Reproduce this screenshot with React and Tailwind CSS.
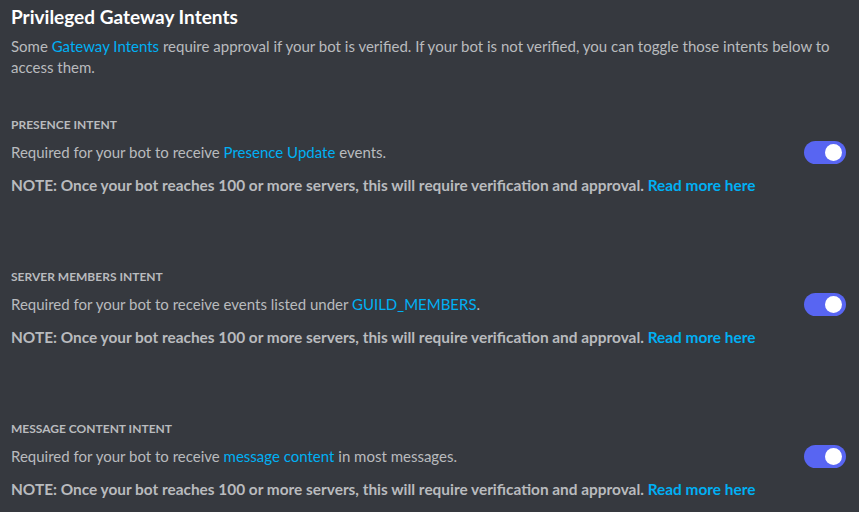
import { useState } from "react";

const intents = [
    {
        label: "Presence Intent",
        before: "Required for your bot to receive ",
        link: "Presence Update",
        after: " events.",
    },
    {
        label: "Server Members Intent",
        before: "Required for your bot to receive events listed under ",
        link: "GUILD_MEMBERS",
        after: ".",
    },
    {
        label: "Message Content Intent",
        before: "Required for your bot to receive ",
        link: "message content",
        after: " in most messages.",
    },
];

function Toggle({ on, onChange }) {
    return (
        <button
            onClick={onChange}
            className={`relative w-[42px] h-[23px] rounded-full shrink-0 transition-colors ${on ? 'bg-[#5865f2]' : 'bg-[#72767d]'}`}
        >
            <span
                className={`absolute top-[3px] w-[17px] h-[17px] rounded-full bg-white transition-all ${on ? 'left-[21px]' : 'left-[3px]'}`}
            ></span>
        </button>
    );
}

function IntentRow({ intent }) {
    const [on, setOn] = useState(true);
    return (
        <section>
            <h3 className="text-[12px] font-bold uppercase text-[#b9bbbe] leading-[16px]">{intent.label}</h3>
            <div className="flex items-center justify-between mt-[7px]">
                <p className="text-[15px] leading-[24px] text-[#b9bbbe]">
                    {intent.before}
                    <a href="#" className="text-[#00b0f4]">{intent.link}</a>
                    {intent.after}
                </p>
                <Toggle on={on} onChange={() => setOn(!on)} />
            </div>
            <p className="mt-[11px] text-[15.4px] leading-[20px] font-bold text-[#b9bbbe]">
                NOTE: Once your bot reaches 100 or more servers, this will require verification and approval.{' '}
                <a href="#" className="text-[#00b0f4]">Read more here</a>
            </p>
        </section>
    );
}

export default function App() {
    return (
        <main className="min-h-screen w-full bg-[#36393f] px-[11px] pr-[13px] pt-[5px] font-['Lato',sans-serif]">
            <h2 className="text-[19px] leading-[24px] font-bold text-white">Privileged Gateway Intents</h2>
            <p className="mt-[7px] text-[15px] leading-[21px] text-[#b9bbbe]">
                Some <a href="#" className="text-[#00b0f4]">Gateway Intents</a> require approval if your bot is verified. If your bot is not verified, you can toggle those intents below to access them.
            </p>
            <div className="mt-[39px] flex flex-col gap-[74px]">
                {intents.map((intent) => (
                    <IntentRow key={intent.label} intent={intent} />
                ))}
            </div>
        </main>
    );
}
